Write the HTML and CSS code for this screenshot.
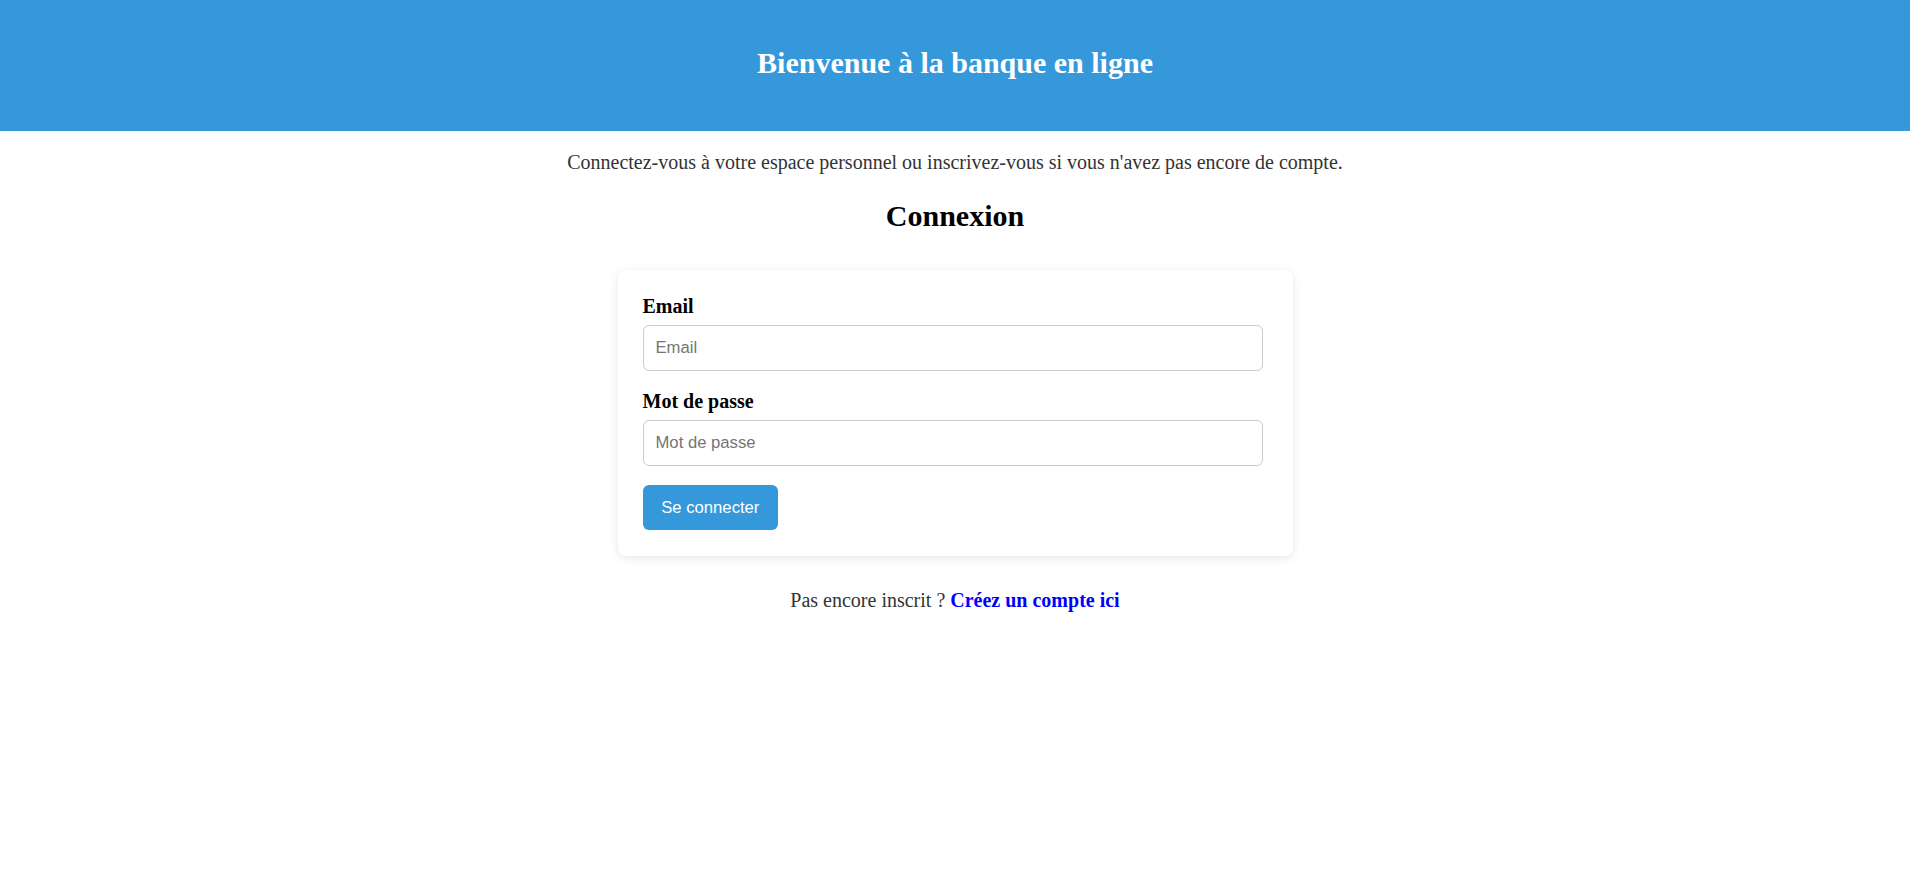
FILE: index.html
```html
<!DOCTYPE html>
<html lang="fr">
<head>
<meta charset="utf-8">
<title>Banque en ligne</title>
<link rel="stylesheet" href="styles.css">
</head>
<body>
<header class="site-header">
  <h1 class="site-title">Bienvenue à la banque en ligne</h1>
</header>
<main class="main">
  <p class="intro">Connectez-vous à votre espace personnel ou inscrivez-vous si vous n'avez pas encore de compte.</p>
  <h2 class="section-title">Connexion</h2>
  <form class="card" onsubmit="return false;">
    <label class="field-label" for="email">Email</label>
    <input class="field-input" id="email" type="email" placeholder="Email">
    <label class="field-label" for="password">Mot de passe</label>
    <input class="field-input" id="password" type="password" placeholder="Mot de passe">
    <button class="btn" type="submit">Se connecter</button>
  </form>
  <p class="signup">Pas encore inscrit ? <a class="signup-link" href="#">Créez un compte ici</a></p>
</main>
</body>
</html>
```
FILE: styles.css
```css
* { box-sizing: border-box; }

html, body {
  margin: 0;
  padding: 0;
  background: #ffffff;
}

body {
  font-family: "Liberation Serif", "Times New Roman", serif;
  font-size: 20px;
  color: #000;
}

.site-header {
  background: #3498db;
  color: #ffffff;
  text-align: center;
  padding: 46px 0 51px;
}

.site-title {
  margin: 0;
  font-size: 30px;
  line-height: 34px;
  font-weight: bold;
}

.main {
  display: flex;
  flex-direction: column;
  align-items: center;
}

.intro {
  margin: 20px 0 0;
  color: #333333;
  font-size: 20px;
  line-height: 23px;
  text-align: center;
}

.section-title {
  margin: 25px 0 0;
  font-size: 30px;
  line-height: 34px;
  font-weight: bold;
  text-align: center;
}

.card {
  margin-top: 37px;
  width: 675px;
  padding: 25px 25px 26px;
  background: #ffffff;
  border-radius: 8px;
  box-shadow: 0 2px 10px rgba(0, 0, 0, 0.1);
  display: flex;
  flex-direction: column;
  align-items: flex-start;
}

.field-label {
  display: block;
  font-weight: bold;
  font-size: 20px;
  line-height: 23px;
  margin-bottom: 7px;
}

.field-input {
  width: 620px;
  height: 46px;
  padding: 0 12px;
  border: 1px solid #cccccc;
  border-radius: 6px;
  font-family: "Liberation Sans", Arial, sans-serif;
  font-size: 16.67px;
  color: #000;
  margin-bottom: 19px;
  outline: none;
}

.field-input::placeholder {
  color: #757575;
}

.btn {
  margin-top: 0;
  height: 45px;
  padding: 0 18.75px;
  background: #3498db;
  color: #ffffff;
  border: none;
  border-radius: 6px;
  font-family: "Liberation Sans", Arial, sans-serif;
  font-size: 16.67px;
  cursor: pointer;
}

.signup {
  margin: 33px 0 0;
  color: #333333;
  font-size: 20px;
  line-height: 23px;
  text-align: center;
}

.signup-link {
  color: #0000ff;
  font-weight: bold;
  text-decoration: none;
}
```
